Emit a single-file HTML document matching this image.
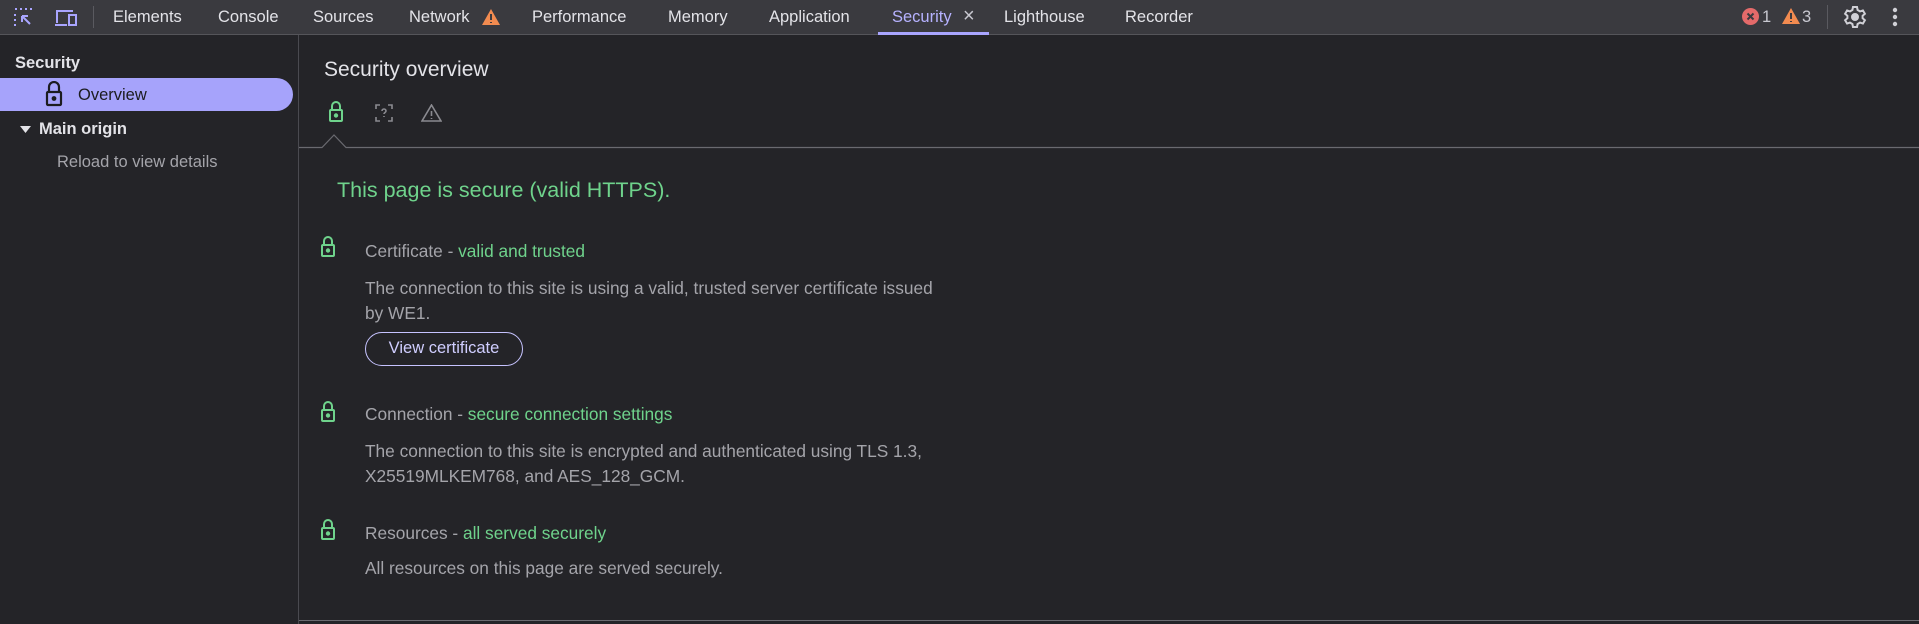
<!DOCTYPE html>
<html><head><meta charset="utf-8"><style>
*{margin:0;padding:0;box-sizing:border-box}
body{width:1919px;height:624px;background:#242428;font-family:"Liberation Sans",sans-serif;position:relative;overflow:hidden;color:#e3e3e8}
.a{position:absolute;white-space:nowrap}
#tb{position:absolute;left:0;top:0;width:1919px;height:35px;background:#3a3a3f;border-bottom:1px solid #55555a}
.tab{position:absolute;top:8px;font-size:16.5px;color:#e3e3e8}
#side{position:absolute;left:0;top:35px;width:299px;height:589px;border-right:1px solid #4a4a50}
.g{color:#6fd38c}
.d{color:#a4a4aa;font-size:17.3px}
.h{color:#a4a4aa;font-size:17.3px}
</style></head><body>
<div id="tb">
<svg class="a" style="left:13px;top:7px" width="22" height="22" viewBox="0 0 22 22" fill="none" stroke="#a9a5ff" stroke-width="2"><path d="M2 2h2M7 2h2M12 2h2M17 2h2M2 7v2M2 12v2M2 17v2" stroke-dasharray="2 2"/><path d="M9 9l8 8M9 9v6M9 9h6"/></svg>
<svg class="a" style="left:53px;top:7px" width="26" height="22" viewBox="0 0 26 22" fill="none" stroke="#a9a5ff" stroke-width="2"><path d="M4 16V4h16M2 18h12"/><rect x="16" y="8" width="7" height="10"/></svg>
<div class="a" style="left:93px;top:6px;width:1px;height:22px;background:#5a5a60"></div>
<div class="tab" style="left:113px">Elements</div>
<div class="tab" style="left:218px">Console</div>
<div class="tab" style="left:313px">Sources</div>
<div class="tab" style="left:409px">Network</div>
<svg class="a" style="left:482px;top:9px" width="18" height="16" viewBox="0 0 18 16"><path d="M9 0L18 16H0Z" fill="#f28b50"/><path d="M9 5v6M9 13v1" stroke="#3a3a3f" stroke-width="2"/></svg>
<div class="tab" style="left:532px">Performance</div>
<div class="tab" style="left:668px">Memory</div>
<div class="tab" style="left:769px">Application</div>
<div class="tab" style="left:892px;color:#b6b2ff">Security</div>
<div class="tab" style="left:963px;color:#c8c8d0;top:5px;font-size:20px">×</div>
<div class="a" style="left:878px;top:32px;width:111px;height:3px;background:#a9a5ff"></div>
<div class="tab" style="left:1004px">Lighthouse</div>
<div class="tab" style="left:1125px">Recorder</div>
<svg class="a" style="left:1742px;top:8px" width="17" height="17"><circle cx="8.5" cy="8.5" r="8.5" fill="#e46a6a"/><path d="M5.5 5.5l6 6M11.5 5.5l-6 6" stroke="#3a3a3f" stroke-width="2"/></svg>
<div class="tab" style="left:1762px;color:#c8c8d0">1</div>
<svg class="a" style="left:1782px;top:8px" width="18" height="16" viewBox="0 0 18 16"><path d="M9 0L18 16H0Z" fill="#f28b50"/><path d="M9 5v6M9 13v1" stroke="#3a3a3f" stroke-width="2"/></svg>
<div class="tab" style="left:1802px;color:#c8c8d0">3</div>
<div class="a" style="left:1827px;top:5px;width:1px;height:24px;background:#5a5a60"></div>
<svg class="a" style="left:1843px;top:5px" width="24" height="24" viewBox="0 0 24 24" fill="none" stroke="#d0d0d6" stroke-width="2"><path d="M10 2h4l.6 3 2.4 1.4 2.9-1 2 3.4-2.3 2v2.4l2.3 2-2 3.4-2.9-1L14.6 19 14 22h-4l-.6-3L7 17.6l-2.9 1-2-3.4 2.3-2v-2.4l-2.3-2 2-3.4 2.9 1L9.4 5z"/><circle cx="12" cy="12" r="3" fill="#d0d0d6"/></svg>
<svg class="a" style="left:1891px;top:7px" width="8" height="22"><circle cx="4" cy="3" r="2.2" fill="#d0d0d6"/><circle cx="4" cy="10" r="2.2" fill="#d0d0d6"/><circle cx="4" cy="17" r="2.2" fill="#d0d0d6"/></svg>
</div>
<div id="side">
<div class="a" style="left:15px;top:19px;font-size:16.5px;font-weight:bold">Security</div>
<div class="a" style="left:0;top:43px;width:293px;height:33px;background:#a6a3fb;border-radius:0 17px 17px 0"></div>
<svg class="a" style="left:45px;top:46px" width="18" height="26" viewBox="0 0 18 26" fill="none" stroke="#1c1c20" stroke-width="2.2"><path d="M4 11V6a5 5 0 0110 0v5"/><rect x="2" y="11" width="14" height="13" rx="1"/><circle cx="9" cy="17.5" r="1.3" fill="#1c1c20"/></svg>
<div class="a" style="left:78px;top:51px;font-size:16.5px;color:#1c1c20">Overview</div>
<svg class="a" style="left:20px;top:91px" width="11" height="8"><path d="M0 0h11L5.5 7z" fill="#e3e3e8"/></svg>
<div class="a" style="left:39px;top:85px;font-size:16.5px;font-weight:bold">Main origin</div>
<div class="a" style="left:57px;top:118px;font-size:16.5px;color:#a4a4aa">Reload to view details</div>
</div>
<div class="a" style="left:324px;top:58px;font-size:21px;color:#e3e3e8">Security overview</div>
<svg class="a" style="left:328px;top:101px" width="16" height="22" viewBox="0 0 16 22" fill="none" stroke="#6fd38c" stroke-width="2"><path d="M4 9V5a4 4 0 018 0v4"/><rect x="2" y="9" width="12" height="11" rx="1"/><circle cx="8" cy="14.5" r="1.2" fill="#6fd38c"/></svg>
<svg class="a" style="left:375px;top:104px" width="18" height="18" viewBox="0 0 18 18" fill="none" stroke="#8a8a90" stroke-width="1.6"><path d="M1 5V1h4M13 1h4v4M17 13v4h-4M5 17H1v-4"/><path d="M7 7a2 2 0 114 0c0 1.5-2 1.5-2 3M9 12v1"/></svg>
<svg class="a" style="left:421px;top:104px" width="21" height="18" viewBox="0 0 21 18" fill="none" stroke="#8a8a90" stroke-width="1.6"><path d="M10.5 1L20 17H1Z"/><path d="M10.5 7v5M10.5 14v1"/></svg>
<svg class="a" style="left:299px;top:133px" width="1620" height="16"><path d="M0 14.5H23L35 2L47 14.5H1620" stroke="#6a6a70" stroke-width="1.2" fill="none"/></svg>
<div class="a g" style="left:337px;top:178px;font-size:21.5px">This page is secure (valid HTTPS).</div>
<svg class="a" style="left:320px;top:236px" width="16" height="22" viewBox="0 0 16 22" fill="none" stroke="#6fd38c" stroke-width="2"><path d="M4 9V5a4 4 0 018 0v4"/><rect x="2" y="9" width="12" height="11" rx="1"/><circle cx="8" cy="14.5" r="1.2" fill="#6fd38c"/></svg>
<div class="a h" style="left:365px;top:241px">Certificate - <span class="g">valid and trusted</span></div>
<div class="a d" style="left:365px;top:276px;line-height:25px">The connection to this site is using a valid, trusted server certificate issued<br>by WE1.</div>
<div class="a" style="left:365px;top:332px;width:158px;height:34px;border:1.5px solid #c6c3ff;border-radius:17px;color:#d0ceff;font-size:16.5px;text-align:center;line-height:31px">View certificate</div>
<svg class="a" style="left:320px;top:401px" width="16" height="22" viewBox="0 0 16 22" fill="none" stroke="#6fd38c" stroke-width="2"><path d="M4 9V5a4 4 0 018 0v4"/><rect x="2" y="9" width="12" height="11" rx="1"/><circle cx="8" cy="14.5" r="1.2" fill="#6fd38c"/></svg>
<div class="a h" style="left:365px;top:404px">Connection - <span class="g">secure connection settings</span></div>
<div class="a d" style="left:365px;top:439px;line-height:25px">The connection to this site is encrypted and authenticated using TLS 1.3,<br>X25519MLKEM768, and AES_128_GCM.</div>
<svg class="a" style="left:320px;top:519px" width="16" height="22" viewBox="0 0 16 22" fill="none" stroke="#6fd38c" stroke-width="2"><path d="M4 9V5a4 4 0 018 0v4"/><rect x="2" y="9" width="12" height="11" rx="1"/><circle cx="8" cy="14.5" r="1.2" fill="#6fd38c"/></svg>
<div class="a h" style="left:365px;top:523px">Resources - <span class="g">all served securely</span></div>
<div class="a d" style="left:365px;top:558px">All resources on this page are served securely.</div>
<div class="a" style="left:299px;top:620px;width:1620px;height:1px;background:#6a6a70"></div>
</body></html>
